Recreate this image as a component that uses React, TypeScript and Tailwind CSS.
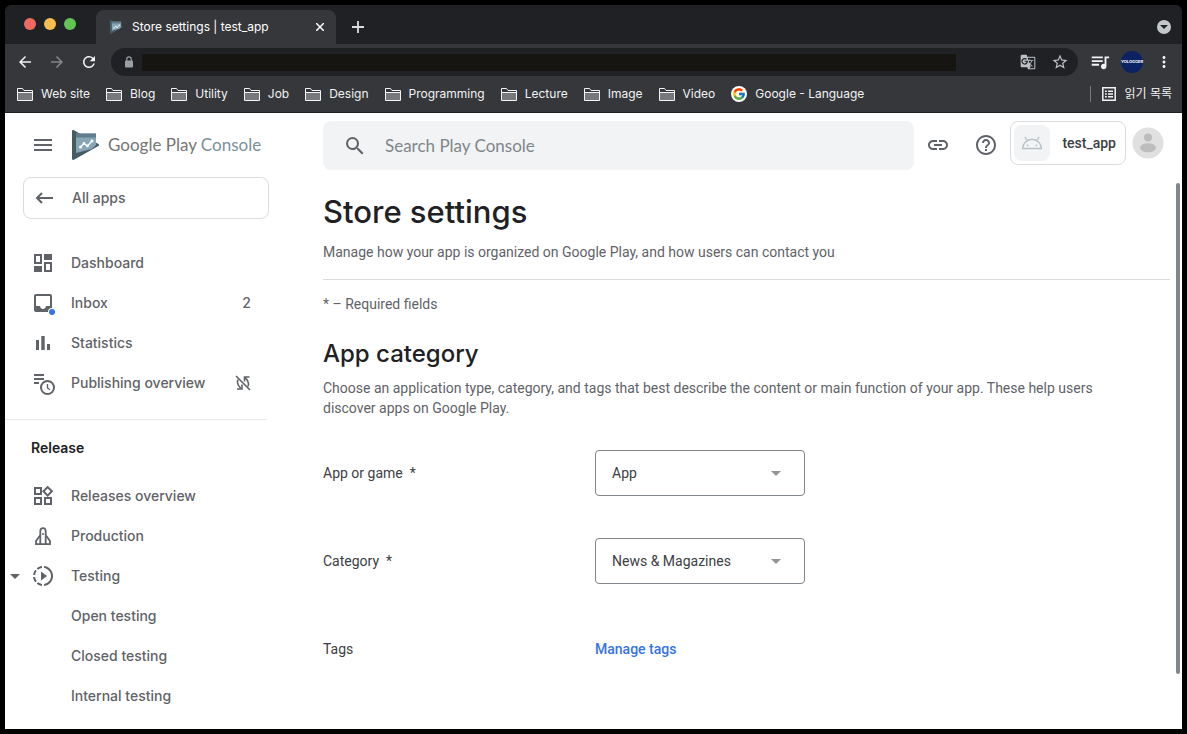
import React from "react";
import {
  MdArrowBack,
  MdArrowForward,
  MdGTranslate,
  MdHelpOutline,
  MdInbox,
  MdLink,
  MdMenu,
  MdMoreVert,
  MdOutlineWidgets,
  MdQueueMusic,
  MdRefresh,
  MdSearch,
  MdSlowMotionVideo,
  MdStarBorder,
} from "react-icons/md";
import { FcGoogle } from "react-icons/fc";

const folders = ["Web site", "Blog", "Utility", "Job", "Design", "Programming", "Lecture", "Image", "Video"];

function PlayConsoleMark({ className }: { className: string }) {
  return (
    <svg viewBox="0 0 28 30" className={className} aria-hidden="true">
      <path d="M0 1.2C0 .2 1 -.2 1.9.3L26.4 14c1 .6 1 1.5 0 2.100L1.900 29.700C1 30.200 0 29.800 0 28.800Z" fill="#455a64" />
      <path d="M4 3.500h20v11.500L20 19 4 23Z" fill="#87a5b5" />
      <path d="M4 3.500h20v4H4Z" fill="#607d8b" />
      <path d="M8.500 17l3.500-3.500 3.500 2.500 4.500-5" fill="none" stroke="#fff" strokeWidth="1.300" />
      <circle cx="8.500" cy="17" r="1.500" fill="#fff" />
      <circle cx="12" cy="13.500" r="1.400" fill="#fff" />
      <circle cx="15.500" cy="16" r="1.400" fill="#fff" />
      <circle cx="20" cy="11" r="1.500" fill="#fff" />
    </svg>
  );
}

function LockIcon() {
  return (
    <svg viewBox="0 0 10 12" className="h-3 w-[10px] text-[#9aa0a6]" aria-hidden="true">
      <rect x="1" y="4.500" width="8" height="7" rx="1" fill="currentColor" />
      <path d="M2.800 5V3a2.200 2.200 0 0 1 4.400 0v2" fill="none" stroke="currentColor" strokeWidth="1.200" />
    </svg>
  );
}

function FolderIcon() {
  return (
    <svg viewBox="0 0 16 13" className="h-[13px] w-4" aria-hidden="true">
      <path d="M.500 12.500V.500H5.500L7 2.500H15.500V12.500Z" fill="#36373a" stroke="#f1f3f4" />
      <path d="M1 5h14v7H1Z" fill="#77787a" />
      <path d="M.500 4.500h15" stroke="#f1f3f4" />
    </svg>
  );
}

function DashboardIcon() {
  return (
    <svg viewBox="0 0 24 24" className="size-6" aria-hidden="true">
      <path d="M4 4h6v8H4Z M14 12h6v8h-6Z" fill="none" stroke="currentColor" strokeWidth="2" />
      <path d="M13 3h8v6h-8Z M3 15h8v6H3Z" fill="currentColor" />
    </svg>
  );
}

function InboxIcon() {
  return (
    <span className="relative">
      <MdInbox className="size-6" />
      <span className="absolute right-0 bottom-0 size-[6px] rounded-full bg-[#3574e6] ring-1 ring-white" />
    </span>
  );
}

function StatisticsIcon() {
  return (
    <svg viewBox="0 0 24 24" className="size-6" fill="currentColor" aria-hidden="true">
      <path d="M5 9h3v10H5Z M10.300 5h3.400v14h-3.400Z M16 13h3v6h-3Z" />
    </svg>
  );
}

function PublishingIcon() {
  return (
    <svg viewBox="0 0 24 24" className="size-6 overflow-visible" fill="none" stroke="currentColor" strokeWidth="2" aria-hidden="true">
      <path d="M3 4h10M3 8h10M3 12h5" />
      <circle cx="16.500" cy="16.500" r="6.500" />
      <path d="M16.500 13v4l2.500 1.800" strokeWidth="1.400" />
    </svg>
  );
}

function RocketIcon() {
  return (
    <svg viewBox="0 0 24 24" className="size-6" fill="none" stroke="currentColor" strokeWidth="1.800" aria-hidden="true">
      <path d="M9.300 20V7.500a2.700 3.300 0 0 1 5.400 0V20" />
      <path d="M9 11.500L5 17v3.100h14V17l-4-5.500" />
      <circle cx="12" cy="10" r="1" fill="currentColor" stroke="none" />
    </svg>
  );
}

function SyncOffIcon() {
  return (
    <svg viewBox="0 0 16 16" className="size-4" fill="none" stroke="currentColor" strokeWidth="1.600" aria-hidden="true">
      <path d="M1 1l14 14" />
      <path d="M3.200 4.500C1.800 7.200 2.400 10.200 5.600 13.200M2 14h5V9.500" />
      <path d="M12.800 11.500C14.200 8.800 13.600 5.800 10.400 2.800M14.500 2H9.500v4.500" />
    </svg>
  );
}

function AndroidIcon() {
  return (
    <svg viewBox="0 0 22 14" className="h-[14px] w-[22px]" fill="none" stroke="#bdc1c6" strokeWidth="1.400" aria-hidden="true">
      <path d="M1.700 12.500a9.300 9.300 0 0 1 18.600 0Z" />
      <path d="M6.300 5.200L4 1M15.700 5.200L18 1" />
      <circle cx="6.700" cy="9.300" r=".900" fill="#bdc1c6" stroke="none" />
      <circle cx="15.300" cy="9.300" r=".900" fill="#bdc1c6" stroke="none" />
    </svg>
  );
}

function Caret({ className }: { className: string }) {
  return (
    <svg viewBox="0 0 10 5" className={className} fill="currentColor" aria-hidden="true">
      <path d="M0 0h10L5 5Z" />
    </svg>
  );
}

function TabStrip() {
  return (
    <div className="flex h-[39px] items-end rounded-t-md bg-[#202124]">
      <div className="flex h-full w-[91px] items-center gap-2 pb-[2px] pl-[19px]">
        <button aria-label="Close window" className="size-3 rounded-full bg-[#ed6a5e]" />
        <button aria-label="Minimize window" className="size-3 rounded-full bg-[#f5bf4f]" />
        <button aria-label="Zoom window" className="size-3 rounded-full bg-[#61c554]" />
      </div>
      <div className="flex h-[34px] w-[240px] items-center rounded-t-lg bg-[#36373a] pr-[10px] pl-[14px] text-white">
        <PlayConsoleMark className="h-[14px] w-[13px]" />
        <span className="ml-[9px] flex-1 text-xs">Store settings | test_app</span>
        <button aria-label="Close tab" className="flex size-3 items-center justify-center">
          <svg viewBox="0 0 8 8" className="size-2" stroke="currentColor" strokeWidth="1.500" aria-hidden="true">
            <path d="M0 0L8 8M8 0L0 8" />
          </svg>
        </button>
      </div>
      <button aria-label="New tab" className="ml-[15px] flex h-[34px] items-center text-[#dadce0]">
        <svg viewBox="0 0 14 14" className="size-[14px]" stroke="currentColor" strokeWidth="1.800" aria-hidden="true">
          <path d="M7 1v12M1 7h12" />
        </svg>
      </button>
      <button aria-label="Search tabs" className="mr-[11px] mb-[10px] ml-auto flex size-[14px] items-center justify-center rounded-full bg-[#c4c7ca] text-[#202124]">
        <Caret className="h-1 w-2" />
      </button>
    </div>
  );
}

function Toolbar() {
  return (
    <div className="flex h-9 items-center bg-[#36373a] pr-[9px] pl-[11px] text-[#f1f3f4]">
      <button aria-label="Back"><MdArrowBack className="size-[18px]" /></button>
      <button aria-label="Forward" className="ml-[14px] text-[#85878a]"><MdArrowForward className="size-[18px]" /></button>
      <button aria-label="Reload" className="ml-[14px]"><MdRefresh className="size-[18px]" /></button>
      <div className="ml-[13px] flex h-7 flex-1 items-center rounded-full bg-[#202124] pr-[9px] pl-[13px] text-[#bdc1c6]">
        <LockIcon />
        <input aria-label="Address" className="mr-16 ml-2 h-[17px] min-w-0 flex-1 bg-[#161512] text-xs text-white outline-none" />
        <button aria-label="Translate this page"><MdGTranslate className="size-4" /></button>
        <button aria-label="Bookmark this page" className="ml-[15px]"><MdStarBorder className="size-[18px]" /></button>
      </div>
      <button aria-label="Media controls" className="ml-[11px]"><MdQueueMusic className="size-[22px]" /></button>
      <button aria-label="Profile" className="ml-[10px] flex size-[22px] items-center justify-center rounded-full bg-[#0b2265] text-[4px] font-bold text-white">
        YOLOGGER
      </button>
      <button aria-label="Menu" className="ml-3"><MdMoreVert className="size-[18px]" /></button>
    </div>
  );
}

function BookmarksBar() {
  return (
    <nav aria-label="Bookmarks" className="flex h-[33px] items-center gap-4 border-b border-[#202124] bg-[#36373a] pr-[10px] pb-1 pl-3 text-xs whitespace-nowrap text-[#f1f3f4]">
      {folders.map((name) => (
        <a key={name} href="#" className="flex items-center gap-2">
          <FolderIcon />
          {name}
        </a>
      ))}
      <a href="#" className="flex items-center gap-2">
        <span className="flex size-4 items-center justify-center rounded-full bg-white">
          <FcGoogle className="size-[14px]" />
        </span>
        Google - Language
      </a>
      <a href="#" className="ml-auto flex h-4 items-center gap-2 border-l border-[#77787a] pl-[11px]">
        <svg viewBox="0 0 14 14" className="size-[14px]" fill="none" stroke="currentColor" strokeWidth="1.500" aria-hidden="true">
          <path d="M.8.800h12.400v12.400H.800Z" />
          <path d="M3 4.200h1.800M3 7h1.800M3 9.800h1.800M6 4.200h5M6 7h5M6 9.800h5" />
        </svg>
        읽기 목록
      </a>
    </nav>
  );
}

function Header() {
  return (
    <header className="flex h-16 items-start pt-2 pr-[18px] text-[#5f6368]">
      <div className="flex h-12 w-[318px] shrink-0 items-center pl-[26px]">
        <button aria-label="Toggle menu"><MdMenu className="size-6" /></button>
        <a href="#" className="ml-[17px] flex items-center gap-2 font-[Lato,sans-serif] text-[17px] whitespace-nowrap text-[#757575]">
          <PlayConsoleMark className="h-[30px] w-7" />
          <span>Google Play <span className="text-[#78909c]">Console</span></span>
        </a>
      </div>
      <label className="flex h-[49px] min-w-0 flex-1 items-center rounded-lg bg-[#f1f3f4] pl-5">
        <MdSearch className="size-6" />
        <input aria-label="Search Play Console" placeholder="Search Play Console" className="ml-[18px] min-w-0 flex-1 bg-transparent font-[Lato,sans-serif] text-[17px] outline-none placeholder:text-[#80868b]" />
      </label>
      <button aria-label="Copy link" className="ml-3 flex h-12 items-center"><MdLink className="size-6" /></button>
      <button aria-label="Help" className="ml-6 flex h-12 items-center"><MdHelpOutline className="size-6" /></button>
      <button className="ml-3 flex h-11 items-center gap-3 rounded-lg border border-[#dadce0] pr-[9px] pl-[3px] font-[Roboto,sans-serif] text-sm font-medium text-[#3c4043]">
        <span className="flex size-9 items-center justify-center rounded-lg bg-[#f1f3f4]"><AndroidIcon /></span>
        test_app
      </button>
      <button aria-label="Account" className="ml-[6px] flex h-11 items-center">
        <svg viewBox="0 0 32 32" className="size-8" aria-hidden="true">
          <circle cx="16" cy="16" r="15.500" fill="#e0e0e0" />
          <circle cx="16" cy="10.500" r="4" fill="#bdbdbd" />
          <ellipse cx="16" cy="20.800" rx="8" ry="4.500" fill="#bdbdbd" />
        </svg>
      </button>
    </header>
  );
}

type NavItemProps = { label: string; icon?: React.ReactNode; trailing?: React.ReactNode; open?: boolean };

function NavItem({ label, icon, trailing, open }: NavItemProps) {
  return (
    <li>
      <a href="#" className="flex h-10 items-center pr-4">
        <span className="w-[26px] pl-[5px]">{open && <Caret className="h-[5px] w-[10px]" />}</span>
        <span className="mr-4 flex size-6">{icon}</span>
        <span className="flex-1">{label}</span>
        {trailing}
      </a>
    </li>
  );
}

function Sidebar() {
  return (
    <aside className="w-[262px] shrink-0 text-sm font-medium text-[#5f6368]">
      <a href="#" className="-mr-[2px] ml-[18px] flex h-[42px] items-center rounded-lg border border-[#dadce0] pl-[11px]">
        <svg viewBox="0 0 18 12" className="h-3 w-[18px]" fill="none" stroke="currentColor" strokeWidth="2" aria-hidden="true">
          <path d="M18 6H2M7 1L2 6l5 5" />
        </svg>
        <span className="ml-[19px]">All apps</span>
      </a>
      <ul className="mt-6 border-b border-[#e8eaed] pb-4">
        <NavItem label="Dashboard" icon={<DashboardIcon />} />
        <NavItem label="Inbox" icon={<InboxIcon />} trailing={<span>2</span>} />
        <NavItem label="Statistics" icon={<StatisticsIcon />} />
        <NavItem label="Publishing overview" icon={<PublishingIcon />} trailing={<SyncOffIcon />} />
      </ul>
      <h2 className="mt-[18px] pl-[26px] font-semibold text-[#202124]">Release</h2>
      <ul className="mt-[18px]">
        <NavItem label="Releases overview" icon={<MdOutlineWidgets className="size-6" />} />
        <NavItem label="Production" icon={<RocketIcon />} />
        <NavItem label="Testing" icon={<MdSlowMotionVideo className="size-6" />} open />
        <NavItem label="Open testing" />
        <NavItem label="Closed testing" />
        <NavItem label="Internal testing" />
      </ul>
    </aside>
  );
}

function SelectField({ id, label, options }: { id: string; label: string; options: string[] }) {
  return (
    <div className="grid h-[46px] grid-cols-[272px_1fr] items-center">
      <label htmlFor={id}>{label}&nbsp; *</label>
      <div className="relative h-full w-[210px]">
        <select id={id} className="h-full w-full appearance-none rounded-[4px] border border-[#80868b] bg-white pl-4">
          {options.map((option) => (
            <option key={option}>{option}</option>
          ))}
        </select>
        <Caret className="pointer-events-none absolute top-[21px] right-6 h-[5px] w-[10px] text-[#919599]" />
      </div>
    </div>
  );
}

function StoreSettings() {
  return (
    <main className="relative min-w-0 flex-1 pt-[13px] pr-3 pl-14 font-[Roboto,sans-serif] text-sm text-[#5f6368]">
      <h1 className="font-[Inter,sans-serif] text-[31px] leading-[44px] font-medium text-[#202124]">Store settings</h1>
      <p className="mt-2 border-b border-[#dadce0] pb-[17px]">
        Manage how your app is organized on Google Play, and how users can contact you
      </p>
      <p className="mt-[14px]">* – Required fields</p>
      <h2 className="mt-6 font-[Inter,sans-serif] text-2xl font-medium text-[#202124]">App category</h2>
      <p className="mt-2 pr-10">
        Choose an application type, category, and tags that best describe the content or main function of your app. These help users discover apps on Google Play.
      </p>
      <form className="mt-8 flex flex-col gap-[42px] text-[#3c4043]">
        <SelectField id="type" label="App or game" options={["App", "Game"]} />
        <SelectField id="category" label="Category" options={["News & Magazines", "Education", "Tools"]} />
        <div className="grid h-[46px] grid-cols-[272px_1fr] items-center">
          <span>Tags</span>
          <a href="#" className="font-medium text-[#3574e6]">Manage tags</a>
        </div>
      </form>
      <div className="absolute top-[6px] right-[2px] h-[491px] w-1 rounded-full bg-[#80868b]" />
    </main>
  );
}

export default function App() {
  return (
    <div className="flex min-h-screen flex-col bg-black p-[5px] font-[Inter,'Noto_Sans_CJK_KR',sans-serif]">
      <TabStrip />
      <Toolbar />
      <BookmarksBar />
      <div className="flex flex-1 flex-col bg-white">
        <Header />
        <div className="flex flex-1">
          <Sidebar />
          <StoreSettings />
        </div>
      </div>
    </div>
  );
}
